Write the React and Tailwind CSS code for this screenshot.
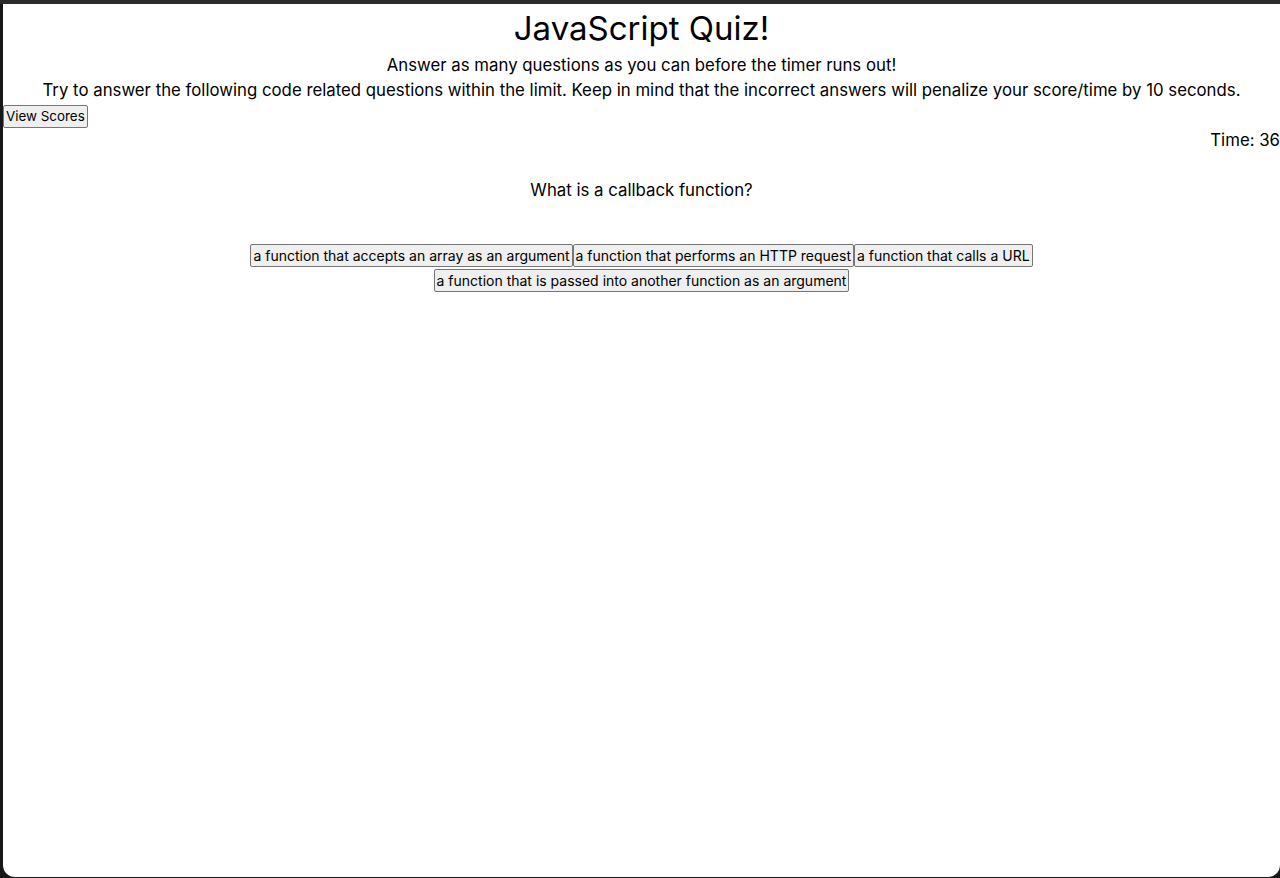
import React from "react";

const answers = [
  "a function that accepts an array as an argument",
  "a function that performs an HTTP request",
  "a function that calls a URL",
  "a function that is passed into another function as an argument",
];

const btnClass =
  "h-[23px] px-[2px] leading-[19px] text-black bg-[#efefef] border border-[#767676] rounded-[2px] whitespace-nowrap";

const AnswerButton = ({ text, hover }) => (
  <button
    className={
      btnClass + " text-[14px]" + (hover ? " bg-[#e5e5e5] border-[#4f4f4f]" : "")
    }
  >
    {text}
  </button>
);

export default function App() {
  return (
    <div className="flex flex-col h-[878px] bg-[#171717] overflow-hidden">
      <div className="h-[4px] bg-[#2b2b2b] shrink-0" />
      <div className="flex-1 pl-[3px] pb-[1px] flex">
        <div className="flex-1 bg-white rounded-b-[12px] font-['Inter',sans-serif] text-black flex flex-col">
          <h1 className="text-[33px] leading-[49px] text-center">JavaScript Quiz!</h1>
          <p className="text-[16.8px] leading-[25px] text-center">
            Answer as many questions as you can before the timer runs out!
          </p>
          <p className="text-[16.8px] leading-[25px] text-center">
            Try to answer the following code related questions within the limit. Keep in mind
            that the incorrect answers will penalize your score/time by 10 seconds.
          </p>
          <div>
            <button className={btnClass + " text-[13.4px]"}>View Scores</button>
          </div>
          <div className="text-right text-[16.8px] leading-[25px]">Time: 36</div>
          <div className="text-center text-[16.8px] leading-[25px] mt-[25px]">
            What is a callback function?
          </div>
          <div className="mt-[41px] flex flex-col items-center gap-[2px]">
            <div className="flex">
              <AnswerButton text={answers[0]} />
              <AnswerButton text={answers[1]} hover />
              <AnswerButton text={answers[2]} />
            </div>
            <div className="flex">
              <AnswerButton text={answers[3]} />
            </div>
          </div>
        </div>
      </div>
    </div>
  );
}
